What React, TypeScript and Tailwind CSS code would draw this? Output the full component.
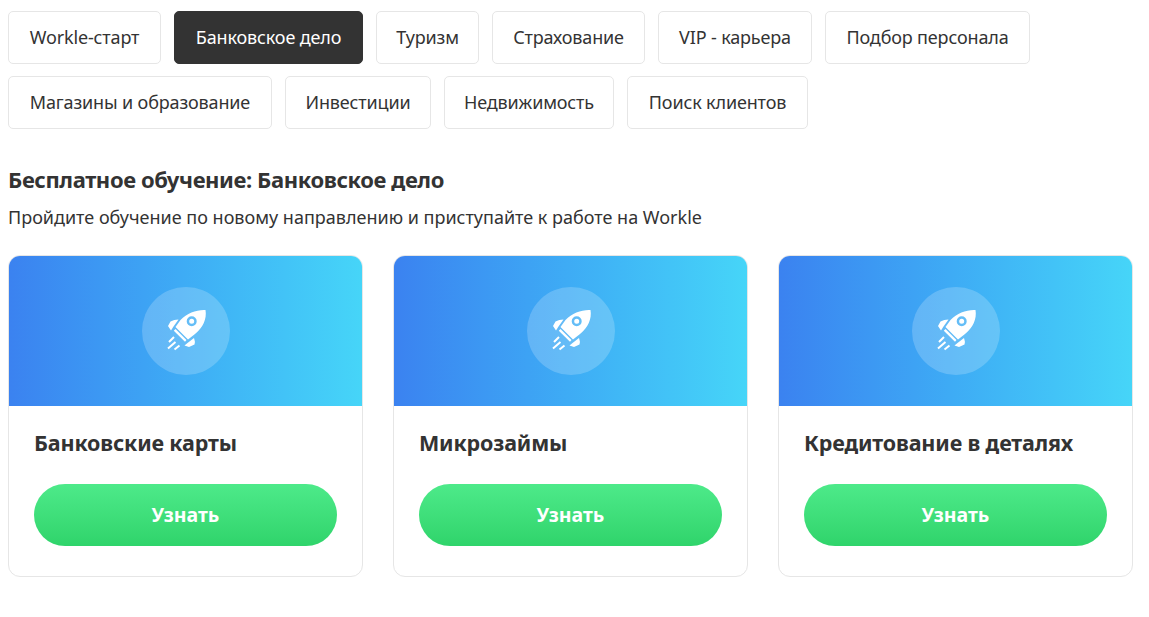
import React from 'react';

const row1 = [
  { label: 'Workle-старт', width: 'w-[153px]' },
  { label: 'Банковское дело', width: 'w-[189px]' },
  { label: 'Туризм', width: 'w-[103px]' },
  { label: 'Страхование', width: 'w-[153px]' },
  { label: 'VIP - карьера', width: 'w-[154px]' },
  { label: 'Подбор персонала', width: 'w-[205px]' },
];
const row2 = [
  { label: 'Магазины и образование', width: 'w-[264px]' },
  { label: 'Инвестиции', width: 'w-[146px]' },
  { label: 'Недвижимость', width: 'w-[170px]' },
  { label: 'Поиск клиентов', width: 'w-[181px]' },
];
const courses = ['Банковские карты', 'Микрозаймы', 'Кредитование в деталях'];

function Tab({ label, width }: { label: string; width: string }) {
  const active = label === 'Банковское дело';
  const base = 'h-[53px] rounded-[5px] border text-[18px] tracking-[-0.15px] whitespace-nowrap ' + width;
  return (
    <button className={base + (active ? ' border-[#333333] bg-[#333333] text-white' : ' border-[#e6e6e6] bg-white text-[#333333]')}>
      {label}
    </button>
  );
}

function Rocket() {
  return (
    <svg width="50" height="50" viewBox="0 2 50 50" fill="white">
      <path
        fillRule="evenodd"
        d="M44.500 6C36 5.500 26 9 19.500 16L14.500 23L27 35.500L34 30C42 23.500 46 15 44.500 6ZM30.700 12.300a5 5 0 1 1 0 10 5 5 0 0 1 0-10ZM30.700 14.800a2.500 2.500 0 1 0 0 5 2.500 2.500 0 0 0 0-5Z"
      />
      <path d="M14.500 25L25.500 36L24 37.800L12.800 26.800Z" />
      <path d="M7 22L9.500 17.500Q13 15.500 17.500 15.500L12.500 22.500L10 26.500Z" />
      <path d="M23.500 41.500L26.500 39L33 34Q34.500 38 33.500 40.500L28 43Z" />
      <path d="M13 33L8 38M14.500 38L7 44.500M18.500 41.500L13.500 45.500" stroke="white" strokeWidth="2" fill="none" />
    </svg>
  );
}

function CourseCard({ title }: { title: string }) {
  return (
    <div className="w-[355px] h-[322px] rounded-[12px] border border-[#e6e6e6] bg-white overflow-hidden">
      <div className="h-[150px] flex items-center justify-center bg-gradient-to-r from-[#3b82f0] to-[#46d5f8]">
        <div className="w-[88px] h-[88px] rounded-full bg-white/20 flex items-center justify-center">
          <Rocket />
        </div>
      </div>
      <div className="px-[25px] pt-[21px]">
        <h3 className="text-[21.5px] leading-[32px] font-bold text-[#333333] tracking-[-0.15px]">{title}</h3>
        <button className="mt-[25px] w-[303px] h-[62px] rounded-full bg-gradient-to-b from-[#4dea8a] to-[#2fd46b] text-white text-[19.5px] font-bold">
          Узнать
        </button>
      </div>
    </div>
  );
}

export default function App() {
  return (
    <div className="min-h-[617px] bg-white pl-2 pt-[11px] font-['Noto_Sans',sans-serif] text-[#333333]">
      <div className="flex flex-col gap-3">
        <div className="flex gap-[13px]">
          {row1.map(t => <Tab key={t.label} {...t} />)}
        </div>
        <div className="flex gap-[13px]">
          {row2.map(t => <Tab key={t.label} {...t} />)}
        </div>
      </div>
      <h2 className="mt-[35px] text-[22px] leading-[30px] font-bold tracking-[-0.4px]">Бесплатное обучение: Банковское дело</h2>
      <p className="mt-[11px] text-[18px] leading-[24px]">Пройдите обучение по новому направлению и приступайте к работе на Workle</p>
      <div className="flex gap-[30px] mt-[26px]">
        {courses.map(c => <CourseCard key={c} title={c} />)}
      </div>
    </div>
  );
}
